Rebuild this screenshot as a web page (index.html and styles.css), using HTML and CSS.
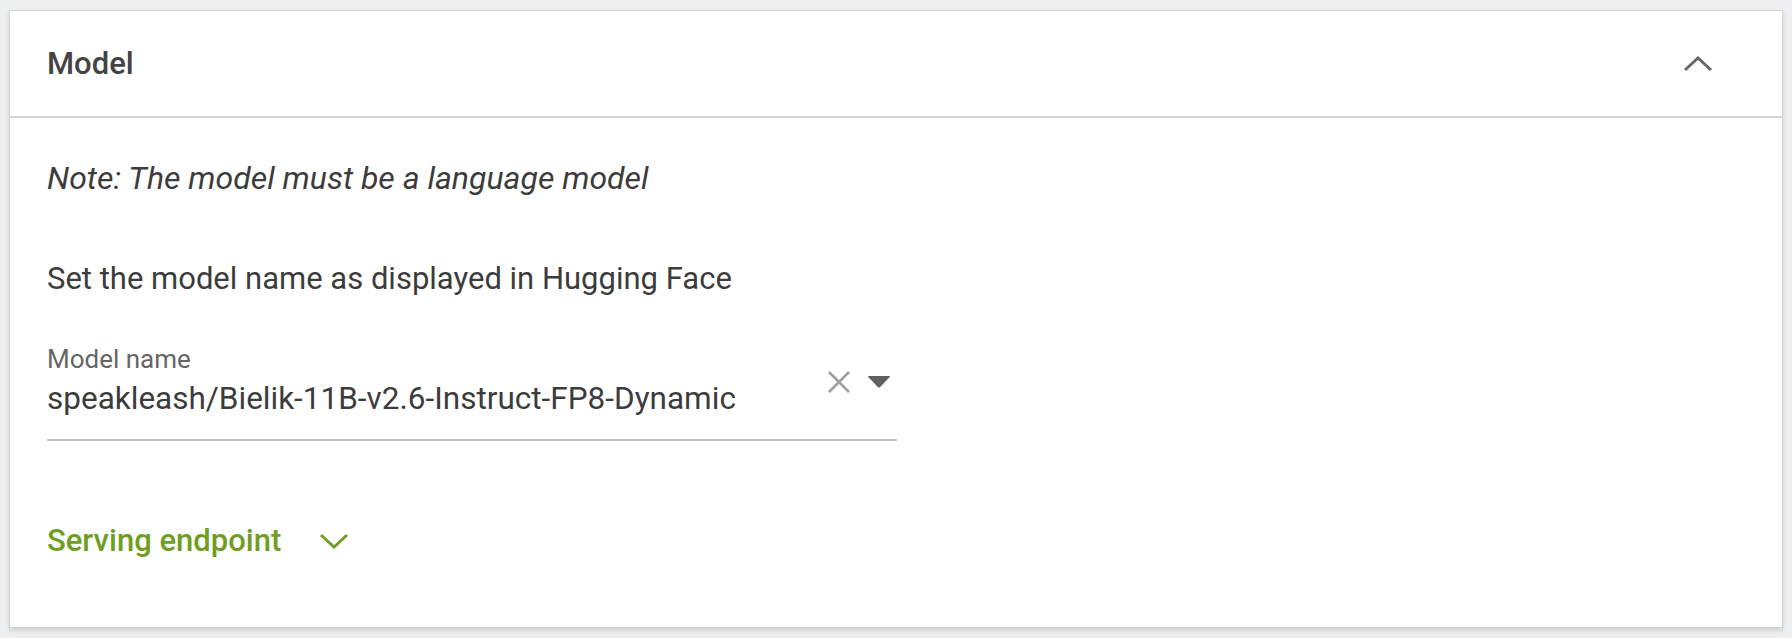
FILE: index.html
```html
<!DOCTYPE html>
<html lang="en">
<head>
    <meta charset="UTF-8">
    <title>Model</title>
    <link rel="stylesheet" href="styles.css">
</head>
<body>

    <section class="panel">
        <header class="panel-header">
            <h2>Model</h2>
            <button class="icon-btn" aria-label="Collapse">
                <svg width="30" height="18" viewBox="0 0 30 18"><path d="M2 15 L15 3 L28 15" fill="none" stroke="#666" stroke-width="3"/></svg>
            </button>
        </header>

        <div class="panel-body">
            <p class="note">Note: The model must be a language model</p>
            <p class="hint">Set the model name as displayed in Hugging Face</p>

            <div class="field">
                <label>Model name</label>
                <div class="field-input">
                    <span class="value">speakleash/Bielik-11B-v2.6-Instruct-FP8-Dynamic</span>
                    <span class="field-icons">
                        <svg width="24" height="24" viewBox="0 0 24 24"><path d="M2 2 L22 22 M22 2 L2 22" stroke="#a0a0a0" stroke-width="2.6"/></svg>
                        <svg width="24" height="14" viewBox="0 0 24 14"><path d="M2 1 H22 Q23.5 1 22.5 2.2 L13.2 12 Q12 13.2 10.8 12 L1.5 2.2 Q0.5 1 2 1 Z" fill="#5f5f5f"/></svg>
                    </span>
                </div>
            </div>

            <div class="toggle">
                <span>Serving endpoint</span>
                <svg width="30" height="18" viewBox="0 0 30 18"><path d="M2 3 L15 15 L28 3" fill="none" stroke="#6f9e24" stroke-width="3"/></svg>
            </div>
        </div>
    </section>

</body>
</html>
```

FILE: styles.css
```css
body {
    font-family: Roboto, "Liberation Sans", sans-serif;
    margin: 0;
    padding: 10px 9px 11px;
    background-color: #eeeff1;
    color: #3c3c3c;
}

.panel {
    background-color: white;
    border: 1px solid #d4d4d4;
    box-shadow: 0 3px 5px rgba(0, 0, 0, 0.12);
}

.panel-header {
    display: flex;
    align-items: center;
    justify-content: space-between;
    height: 105px;
    padding: 0 69px 0 37px;
    border-bottom: 2px solid #d6d6d6;
}

.panel-header h2 {
    margin: 0;
    font-size: 31px;
    font-weight: 500;
    color: #444;
}

.icon-btn {
    background: none;
    border: none;
    padding: 0;
    display: flex;
}

.panel-body {
    padding: 40px 37px 66px;
}

.note, .hint {
    margin: 0;
    font-size: 31px;
    line-height: 40px;
}

.note {
    font-style: italic;
    font-size: 32px;
}

.hint {
    margin-top: 61px;
}

.field {
    width: 850px;
    margin-top: 44px;
    border-bottom: 2px solid #bdbdbd;
    padding-bottom: 20px;
}

.field label {
    display: block;
    font-size: 26px;
    line-height: 32px;
    margin-bottom: 4px;
    color: #666;
}

.field-input {
    display: flex;
    align-items: center;
    justify-content: space-between;
}

.value {
    font-size: 31.5px;
    line-height: 40px;
}

.field-icons {
    display: flex;
    align-items: center;
    gap: 16px;
    margin-right: 6px;
    margin-top: -34px;
}

.toggle {
    display: flex;
    align-items: center;
    gap: 38px;
    margin-top: 80px;
    font-size: 31px;
    line-height: 40px;
    font-weight: 500;
    color: #6f9e24;
}
```
